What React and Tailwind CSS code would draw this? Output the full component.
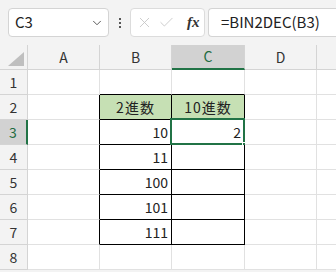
import React from "react";
import { ChevronDown, X, Check } from "lucide-react";

const cols = [
  { key: "A", w: 72 },
  { key: "B", w: 72 },
  { key: "C", w: 73 },
  { key: "D", w: 72 },
  { key: "E", w: 72, hidden: true },
];

const data = {
  B2: "2進数",
  C2: "10進数",
  B3: "10",
  C3: "2",
  B4: "11",
  B5: "100",
  B6: "101",
  B7: "111",
};

const inTable = (c, r) => (c === "B" || c === "C") && r >= 2 && r <= 7;

const font = { fontFamily: "'Noto Sans CJK JP', 'Noto Sans', sans-serif" };

const Cell = ({ c, r, w }) => {
  const id = `${c}${r}`;
  const val = data[id];
  const idx = "ABCDE".indexOf(c);
  const next = "ABCDE"[idx + 1];
  const rightBlack = inTable(c, r) || inTable(next, r);
  const bottomBlack = inTable(c, r) || inTable(c, r + 1);
  const isHead = r === 2 && inTable(c, r);
  const isNum = val && !isHead;

  return (
    <div
      className={`relative flex h-[25px] shrink-0 items-center border-r border-b text-[14px] text-[#222] ${
        rightBlack ? "border-r-black" : "border-r-[#e1e1e1]"
      } ${bottomBlack ? "border-b-black" : "border-b-[#e1e1e1]"} ${
        isHead ? "justify-center bg-[#c6e0b4]" : "justify-end bg-white pr-[3px]"
      }`}
      style={{ width: w }}
    >
      {val && <span className={isNum ? "" : "tracking-[1px]"}>{val}</span>}
      {id === "C3" && (
        <>
          <div className="absolute -left-[2px] -top-[2px] h-[27px] w-[75px] border-2 border-[#217346]" />
          <div className="absolute -bottom-[4px] -right-[4px] h-[6px] w-[6px] border border-white bg-[#217346]" />
        </>
      )}
    </div>
  );
};

export default function App() {
  return (
    <div className="h-[272px] w-[336px] overflow-hidden bg-[#f3f3f3]" style={font}>
      <div className="flex h-[45px] items-start pt-[8px] pl-[8px]">
        <div className="flex h-[29px] w-[101px] items-center justify-between rounded-[4px] border border-[#d4d4d4] bg-white pl-[6px] pr-[4px]">
          <span className="text-[15px] text-[#222]">C3</span>
          <ChevronDown size={14} strokeWidth={1.5} className="text-[#444]" />
        </div>
        <div className="flex h-[29px] w-[21px] flex-col items-center justify-center gap-[2px]">
          <span className="h-[2px] w-[2px] bg-[#555]" />
          <span className="h-[2px] w-[2px] bg-[#555]" />
          <span className="h-[2px] w-[2px] bg-[#555]" />
        </div>
        <div className="flex h-[29px] w-[75px] items-center rounded-[4px] border border-[#dcdcdc] bg-white pl-[5px]">
          <X size={17} strokeWidth={1.2} className="text-[#c4c4c4]" />
          <Check size={17} strokeWidth={1.2} className="ml-[5px] text-[#c4c4c4]" />
          <span
            className="ml-[12px] text-[15px] font-bold italic text-[#333]"
            style={{ fontFamily: "'Liberation Serif', serif" }}
          >
            fx
          </span>
        </div>
        <div className="ml-[3px] flex h-[29px] flex-1 items-center rounded-l-[4px] border border-r-0 border-[#d4d4d4] bg-white pl-[12px]">
          <span className="text-[15px] text-[#222]">=BIN2DEC(B3)</span>
        </div>
      </div>

      <div className="flex">
        <div className="relative h-[25px] w-[28px] shrink-0 border-r border-b border-[#d4d4d4] bg-[#f3f3f3]">
          <div
            className="absolute bottom-[3px] right-[3px] h-[14px] w-[16px] bg-[#bfbfbf]"
            style={{ clipPath: "polygon(100% 0, 100% 100%, 0 100%)" }}
          />
        </div>
        {cols.map((col) => (
          <div
            key={col.key}
            className={`flex h-[25px] shrink-0 items-center justify-center border-r text-[14px] ${
              col.key === "C"
                ? "border-b-2 border-b-[#217346] border-r-[#d4d4d4] bg-[#d2d2d2] text-[#1e6b41]"
                : "border-b border-[#d4d4d4] bg-[#f3f3f3] text-[#333]"
            }`}
            style={{ width: col.w }}
          >
            {col.hidden ? null : col.key}
          </div>
        ))}
      </div>

      {[1, 2, 3, 4, 5, 6, 7, 8].map((r) => (
        <div key={r} className="flex">
          <div
            className={`flex h-[25px] w-[28px] shrink-0 items-center justify-center border-b border-[#d4d4d4] text-[14px] ${
              r === 3
                ? "border-r-2 border-r-[#217346] bg-[#d2d2d2] text-[#1e6b41]"
                : "border-r bg-[#f3f3f3] text-[#333]"
            }`}
          >
            {r}
          </div>
          {cols.map((col) => (
            <Cell key={col.key} c={col.key} r={r} w={col.w} />
          ))}
        </div>
      ))}
    </div>
  );
}
